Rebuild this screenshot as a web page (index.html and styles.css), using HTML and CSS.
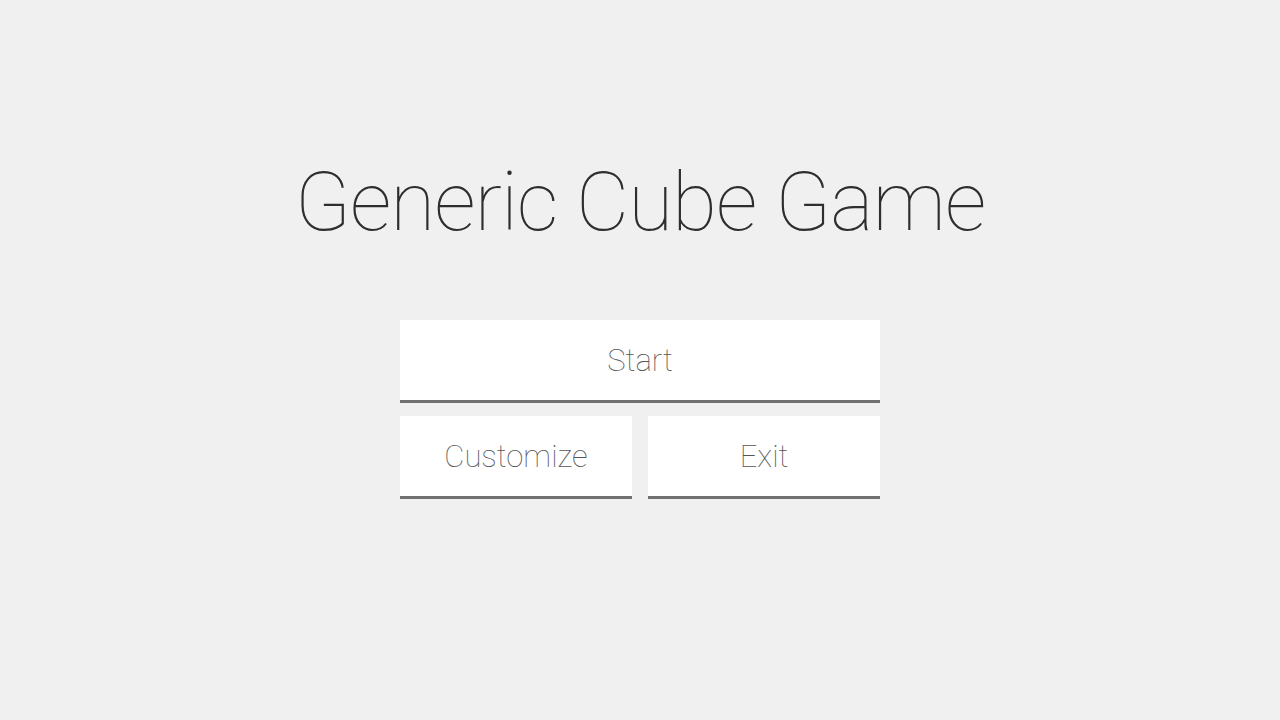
FILE: index.html
```html
<!DOCTYPE html>
<html>
<head>
<meta charset="utf-8">
<link rel="stylesheet" href="styles.css">
</head>
<body>
<main class="menu">
  <h1 class="title">Generic Cube Game</h1>
  <div class="buttons">
    <button class="btn btn-wide">Start</button>
    <div class="row">
      <button class="btn">Customize</button>
      <button class="btn">Exit</button>
    </div>
  </div>
</main>
</body>
</html>
```
FILE: styles.css
```css
html, body {
  margin: 0;
  padding: 0;
  background: #f0f0f0;
  width: 1280px;
  height: 720px;
  overflow: hidden;
  font-family: "Roboto Thin", Roboto, "Liberation Sans", sans-serif;
}
.menu {
  display: flex;
  flex-direction: column;
  align-items: center;
  padding-top: 147px;
}
.title {
  margin: 0;
  font-family: "Roboto Thin", Roboto, "Liberation Sans", sans-serif;
  font-size: 82px;
  font-weight: 100;
  letter-spacing: -1px;
  line-height: 110px;
  color: #2e2e2e;
}
.buttons {
  margin-top: 63px;
  width: 480px;
  display: flex;
  flex-direction: column;
  gap: 13px;
}
.row {
  display: flex;
  gap: 16px;
}
.btn {
  flex: 1 1 0;
  height: 83px;
  border: none;
  border-bottom: 3px solid #707070;
  background: #ffffff;
  font-family: "Roboto Thin", Roboto, "Liberation Sans", sans-serif;
  font-size: 31px;
  font-weight: 100;
  color: #555555;
  padding: 0;
  margin: 0;
}
.btn-wide {
  flex: none;
  width: 100%;
}
```
